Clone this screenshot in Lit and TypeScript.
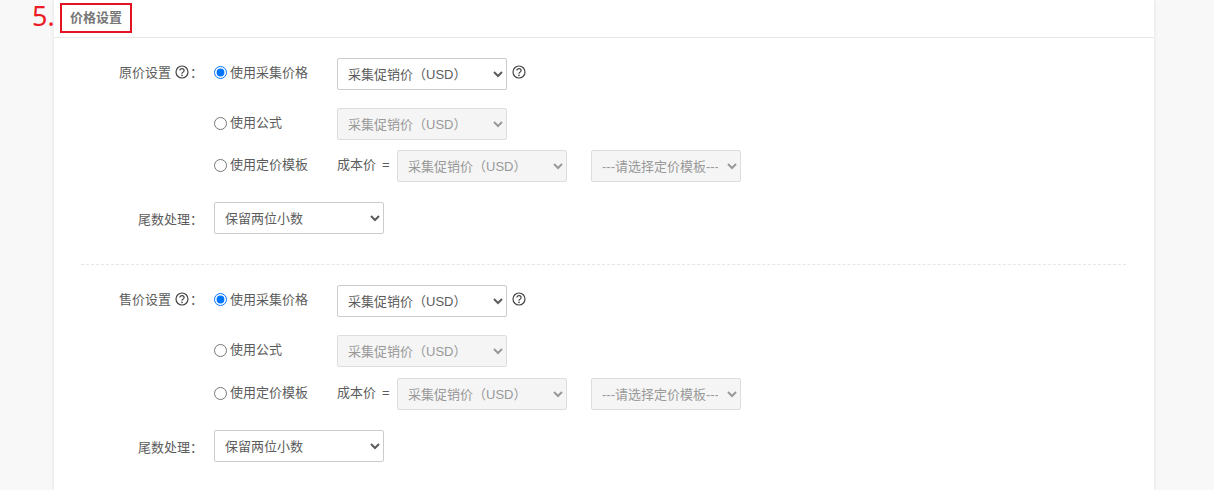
import { LitElement, html, css } from "lit";
import { customElement } from "lit/decorators.js";

const help = (cls: string) => html`<svg class=${cls} viewBox="0 0 14 14" width="14" height="14" fill="none">
  <circle cx="7" cy="7" r="6" stroke="#444" stroke-width="1.2"></circle>
  <path d="M4.9 5.6C4.9 4.4 5.8 3.6 7 3.6s2.1.8 2.1 1.9c0 .8-.5 1.3-1.2 1.7-.6.3-.9.7-.9 1.3v.3" stroke="#444" stroke-width="1.2"></path>
  <circle cx="7" cy="10.4" r=".8" fill="#444"></circle>
</svg>`;

@customElement("app-root")
export class AppRoot extends LitElement {
  static styles = css`
    :host { display: block; height: 490px; overflow: hidden; background: #f8f8f8;
      font-family: "Liberation Sans", "Noto Sans CJK SC", sans-serif; font-size: 13px; color: #5c5c5c; }
    .card { position: relative; width: 1100px; height: 490px; margin-left: 54px; background: #fff;
      box-shadow: 0 0 4px rgba(0,0,0,.1); }
    .step { position: absolute; left: -22px; top: 1px; font-family: "Noto Sans", sans-serif; font-size: 27px; line-height: 30px; color: #ec1c24; }
    .mark { position: absolute; left: 6px; top: 3px; width: 72px; height: 30px; box-sizing: border-box; border: 2px solid #e2141f; }
    .head { height: 37px; border-bottom: 1px solid #e8e8e8; padding-left: 16px; font-weight: bold;
      line-height: 35px; color: #777; }
    .body { padding: 20px 28px 0 27px; }
    .row { display: flex; align-items: center; height: 32px; }
    .gap18 { margin-top: 18px; }
    .gap10 { margin-top: 10px; }
    .gap11 { margin-top: 11px; }
    .gap20 { margin-top: 20px; }
    .label { width: 133px; flex: none; display: flex; justify-content: flex-end; align-items: center;
      padding-right: 11px; box-sizing: border-box; }
    .raised { position: relative; top: -2px; }
    .label .txt { position: relative; top: -1px; }
    .qmark { margin: 0 1px 0 4px; }
    .radio { width: 123px; flex: none; display: flex; align-items: center; height: 100%; position: relative; top: -1px; }
    .radio.first { top: -2px; }
    .radio input { width: 13px; height: 13px; margin: 0 3px 0 0; accent-color: #0075ff; }
    .radio span { position: relative; top: -2px; }
    .radio.first span { top: -1px; }
    select { width: 170px; height: 32px; box-sizing: border-box; border: 1px solid #ccc; border-radius: 2px;
      font: 13px "Liberation Sans", "Noto Sans CJK SC", sans-serif; color: #5c5c5c; background-color: #fff; padding: 0 6px; }
    select:disabled { background-color: #f5f5f5; color: #999; border-color: #ddd; opacity: 1; }
    .narrow { width: 150px; }
    .cost { width: 60px; flex: none; white-space: nowrap; position: relative; top: -3px; }
    .cost span { margin-left: 6px; }
    .tmpl { margin-left: 24px; }
    .tip { margin: -4px 0 0 5px; }
    .dash { border-top: 1px dashed #e6e6e6; margin: 30px 0 20px; }
  `;

  private section(title: string, gap: string) {
    return html`
      <div class="row">
        <div class="label raised"><span class="txt">${title}</span>${help("qmark")}<span class="txt">：</span></div>
        <label class="radio first"><input type="radio" checked /><span>使用采集价格</span></label>
        <select><option>采集促销价（USD）</option></select>
        ${help("tip")}
      </div>
      <div class="row gap18">
        <div class="label"></div>
        <label class="radio"><input type="radio" /><span>使用公式</span></label>
        <select disabled><option>采集促销价（USD）</option></select>
      </div>
      <div class="row ${gap}">
        <div class="label"></div>
        <label class="radio"><input type="radio" /><span>使用定价模板</span></label>
        <div class="cost">成本价<span>=</span></div>
        <select disabled><option>采集促销价（USD）</option></select>
        <select class="narrow tmpl" disabled><option>---请选择定价模板---</option></select>
      </div>
      <div class="row gap20">
        <div class="label">尾数处理：</div>
        <select><option>保留两位小数</option></select>
      </div>
    `;
  }

  render() {
    return html`
      <div class="card">
        <div class="step">5.</div>
        <div class="mark"></div>
        <div class="head">价格设置</div>
        <div class="body">
          ${this.section("原价设置", "gap10")}
          <div class="dash"></div>
          ${this.section("售价设置", "gap11")}
        </div>
      </div>
    `;
  }
}
